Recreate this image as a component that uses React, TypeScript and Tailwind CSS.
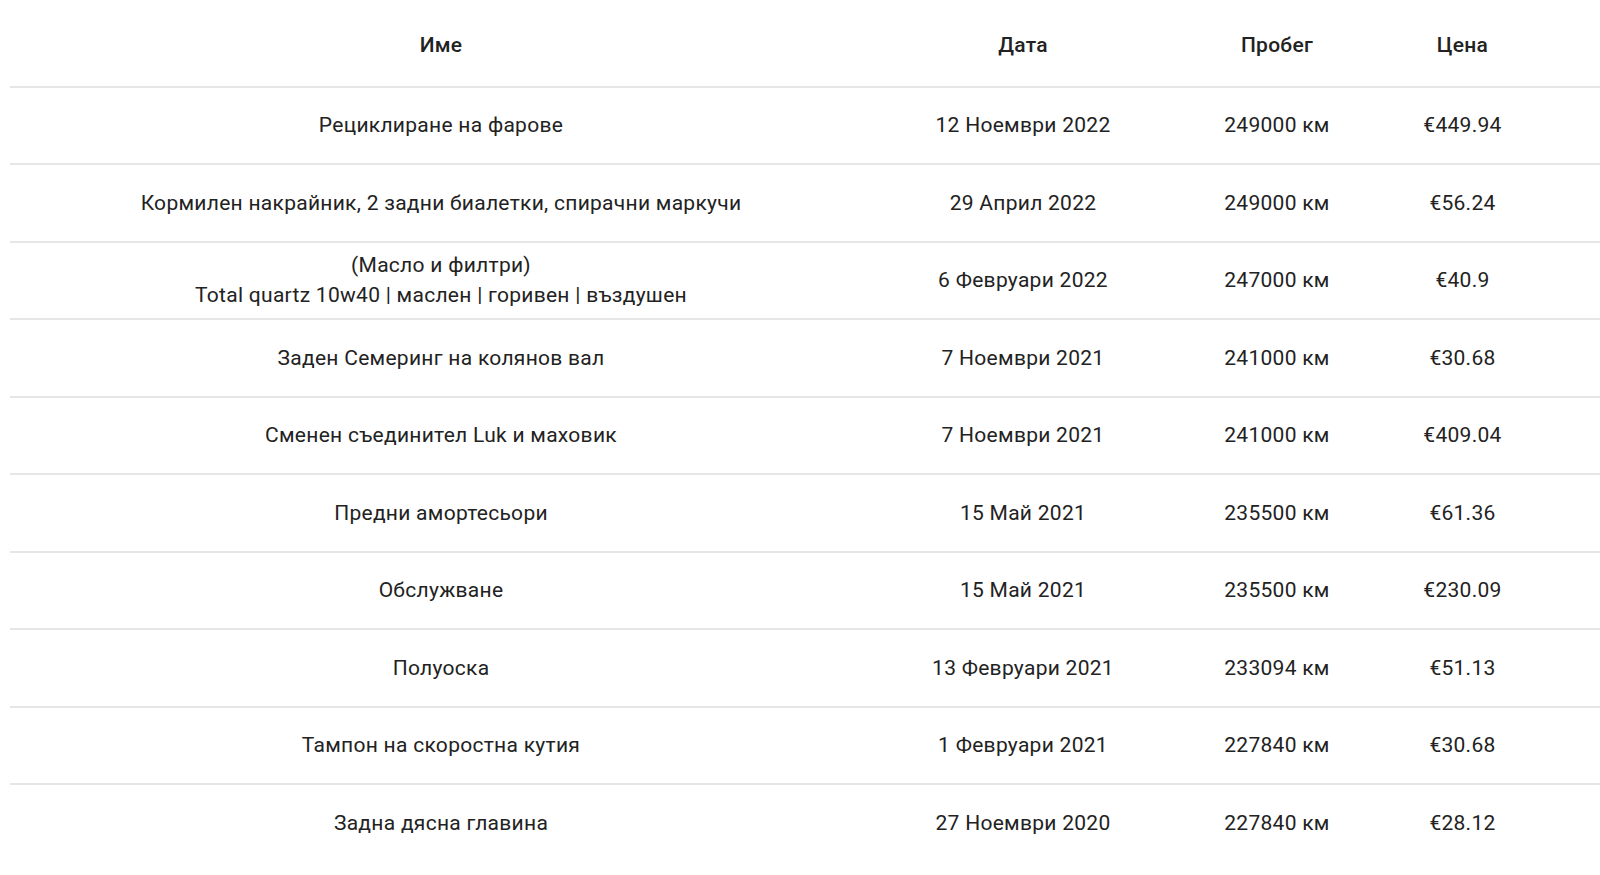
import React from "react";

type Row = { name: string[]; date: string; km: string; price: string };

const rows: Row[] = [
  { name: ["Рециклиране на фарове"], date: "12 Ноември 2022", km: "249000 км", price: "€449.94" },
  { name: ["Кормилен накрайник, 2 задни биалетки, спирачни маркучи"], date: "29 Април 2022", km: "249000 км", price: "€56.24" },
  { name: ["(Масло и филтри)", "Total quartz 10w40 | маслен | горивен | въздушен"], date: "6 Февруари 2022", km: "247000 км", price: "€40.9" },
  { name: ["Заден Семеринг на колянов вал"], date: "7 Ноември 2021", km: "241000 км", price: "€30.68" },
  { name: ["Сменен съединител Luk и маховик"], date: "7 Ноември 2021", km: "241000 км", price: "€409.04" },
  { name: ["Предни амортесьори"], date: "15 Май 2021", km: "235500 км", price: "€61.36" },
  { name: ["Обслужване"], date: "15 Май 2021", km: "235500 км", price: "€230.09" },
  { name: ["Полуоска"], date: "13 Февруари 2021", km: "233094 км", price: "€51.13" },
  { name: ["Тампон на скоростна кутия"], date: "1 Февруари 2021", km: "227840 км", price: "€30.68" },
  { name: ["Задна дясна главина"], date: "27 Ноември 2020", km: "227840 км", price: "€28.12" },
];

const grid = "grid grid-cols-[862px_302px_206px_165px_1fr]";

export default function App() {
  return (
    <div
      className="min-h-[875px] w-full bg-white pl-[10px] overflow-hidden text-[#222222]"
      style={{ fontFamily: "Roboto, 'Noto Sans', sans-serif" }}
    >
      <div className={`${grid} h-[87.5px] pt-[5px] items-center border-b-2 border-[#e6e6e6] text-[21px] font-medium tracking-[0.28px]`}>
        <div className="text-center">Име</div>
        <div className="text-center">Дата</div>
        <div className="text-center">Пробег</div>
        <div className="text-center">Цена</div>
        <div />
      </div>
      {rows.map((r, i) => (
        <div
          key={i}
          className={`${grid} h-[77.5px] items-center border-b-2 border-[#e6e6e6] text-[21px] leading-[30px] tracking-[0.28px] ${i === rows.length - 1 ? "border-transparent" : ""}`}
        >
          <div className="text-center">
            {r.name.map((l, j) => (
              <div key={j}>{l}</div>
            ))}
          </div>
          <div className="text-center">{r.date}</div>
          <div className="text-center">{r.km}</div>
          <div className="text-center">{r.price}</div>
          <div />
        </div>
      ))}
    </div>
  );
}
